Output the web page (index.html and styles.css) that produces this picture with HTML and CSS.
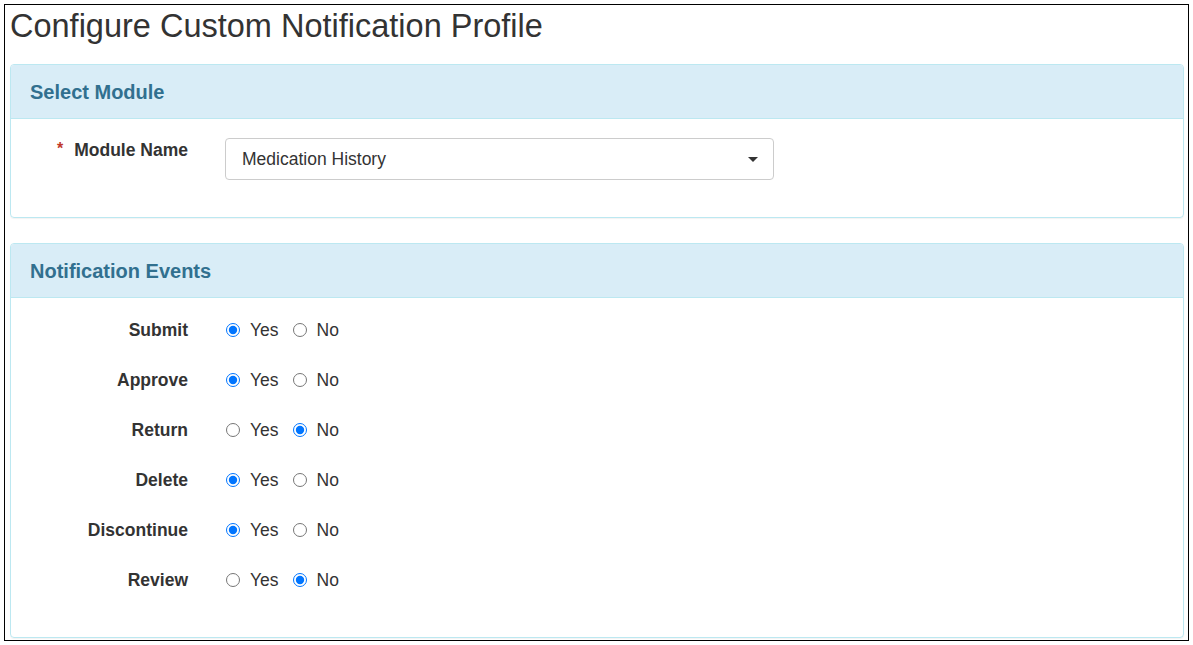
FILE: index.html
```html
<!DOCTYPE html>
<html lang="en">
<head>
    <meta charset="UTF-8">
    <title>Configure Custom Notification Profile</title>
    <link rel="stylesheet" href="styles.css">
</head>
<body>
    <div class="frame">
        <h1 class="page-title">Configure Custom Notification Profile</h1>

        <div class="panel">
            <div class="panel-heading">Select Module</div>
            <div class="panel-body module-body">
                <div class="form-row">
                    <label class="row-label"><span class="required">*</span>Module Name</label>
                    <div class="select-box">
                        <span>Medication History</span>
                        <span class="caret"></span>
                    </div>
                </div>
            </div>
        </div>

        <div class="panel">
            <div class="panel-heading">Notification Events</div>
            <div class="panel-body events-body">
                <div class="form-row event-row">
                    <label class="row-label">Submit</label>
                    <div class="choices">
                        <label class="choice"><input type="radio" name="submit" checked>Yes</label>
                        <label class="choice"><input type="radio" name="submit">No</label>
                    </div>
                </div>
                <div class="form-row event-row">
                    <label class="row-label">Approve</label>
                    <div class="choices">
                        <label class="choice"><input type="radio" name="approve" checked>Yes</label>
                        <label class="choice"><input type="radio" name="approve">No</label>
                    </div>
                </div>
                <div class="form-row event-row">
                    <label class="row-label">Return</label>
                    <div class="choices">
                        <label class="choice"><input type="radio" name="return">Yes</label>
                        <label class="choice"><input type="radio" name="return" checked>No</label>
                    </div>
                </div>
                <div class="form-row event-row">
                    <label class="row-label">Delete</label>
                    <div class="choices">
                        <label class="choice"><input type="radio" name="delete" checked>Yes</label>
                        <label class="choice"><input type="radio" name="delete">No</label>
                    </div>
                </div>
                <div class="form-row event-row">
                    <label class="row-label">Discontinue</label>
                    <div class="choices">
                        <label class="choice"><input type="radio" name="discontinue" checked>Yes</label>
                        <label class="choice"><input type="radio" name="discontinue">No</label>
                    </div>
                </div>
                <div class="form-row event-row">
                    <label class="row-label">Review</label>
                    <div class="choices">
                        <label class="choice"><input type="radio" name="review">Yes</label>
                        <label class="choice"><input type="radio" name="review" checked>No</label>
                    </div>
                </div>
            </div>
        </div>
    </div>
</body>
</html>
```

FILE: styles.css
```css
body {
    margin: 0;
    background: #fff;
    font-family: "Liberation Sans", Arial, sans-serif;
    font-size: 17.5px;
    color: #333;
}
.frame {
    margin: 4px;
    width: 1185px;
    height: 637px;
    border: 1px solid #000;
    padding: 5px 4px 0 5px;
    box-sizing: border-box;
    overflow: hidden;
}
.page-title {
    margin: 0 0 21px 0;
    font-size: 32.5px;
    font-weight: normal;
    line-height: 33px;
    color: #333;
}
.panel {
    width: 1174px;
    border: 1px solid #bce8f1;
    border-radius: 4px;
    margin-bottom: 25px;
    box-sizing: border-box;
    box-shadow: 0 1px 1px rgba(0, 0, 0, 0.05);
}
.panel-heading {
    background: #d9edf7;
    color: #31708f;
    font-size: 20px;
    font-weight: bold;
    line-height: 22px;
    padding: 16px 19px 15px;
    border-bottom: 1px solid #bce8f1;
    border-radius: 3px 3px 0 0;
}
.panel-body {
    padding-left: 15px;
}
.module-body {
    padding-top: 19px;
    padding-bottom: 37px;
}
.events-body {
    padding-top: 22px;
    padding-bottom: 47px;
}
.form-row {
    display: flex;
    align-items: flex-start;
    gap: 37px;
}
.row-label {
    width: 162px;
    text-align: right;
    font-weight: bold;
    line-height: 20px;
    flex-shrink: 0;
}
.module-body .row-label {
    padding-top: 2px;
}
.required {
    color: #c0392b;
    font-size: 16px;
    margin-right: 11px;
    position: relative;
    top: -2px;
}
.select-box {
    width: 549px;
    height: 42px;
    border: 1px solid #ccc;
    border-radius: 4px;
    box-sizing: border-box;
    display: flex;
    align-items: center;
    justify-content: space-between;
    padding: 0 15px 0 16px;
}
.caret {
    width: 0;
    height: 0;
    border-left: 5px solid transparent;
    border-right: 5px solid transparent;
    border-top: 5px solid #333;
}
.event-row {
    margin-bottom: 30px;
}
.event-row:last-child {
    margin-bottom: 0;
}
.choices {
    display: flex;
    gap: 13px;
    line-height: 20px;
}
.choice {
    display: flex;
    align-items: center;
    gap: 10px;
}
.choice input {
    width: 14px;
    height: 14px;
    margin: 0 0 0 1px;
}
```
